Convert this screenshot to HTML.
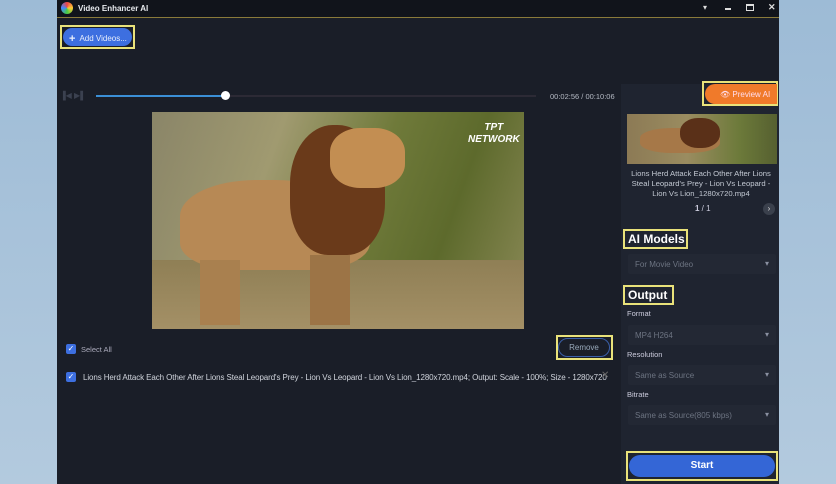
<!DOCTYPE html><html><head><style>
*{margin:0;padding:0;box-sizing:border-box}
body{width:836px;height:484px;overflow:hidden;background:linear-gradient(180deg,#9dbbd6,#b3cade);font-family:"Liberation Sans",sans-serif;position:relative}
.a{position:absolute}
.win{left:57px;top:0;width:722px;height:484px;background:#1a1e28}
.t{color:#c9ced8;font-size:8px}
.dd{background:#232834;border-radius:2px;height:20px;color:#6d7482;font-size:8px;padding:6px 0 0 7px}
.dd:after{content:"▾";position:absolute;right:7px;top:5px;color:#8a90a0;font-size:8px}
.hl{border:2px solid #e9e27a}
</style></head><body>
<div class="a win"></div>
<div class="a" style="left:57px;top:0;width:722px;height:18px;background:#11141b;border-bottom:1px solid #8a7a3a"></div>
<div class="a" style="left:61px;top:2px;width:12px;height:12px;border-radius:50%;background:conic-gradient(#e44,#fc3,#4c4,#48f,#e44)"></div>
<div class="a" style="left:78px;top:4px;color:#e8eaee;font-size:8px;font-weight:bold">Video Enhancer AI</div>
<div class="a" style="left:703px;top:3px;color:#ddd;font-size:8px">▾</div>
<div class="a" style="left:725px;top:8px;width:6px;height:2px;background:#ddd"></div>
<div class="a" style="left:746px;top:4px;width:8px;height:7px;border:1px solid #ddd;border-top-width:2px"></div>
<div class="a" style="left:768px;top:2px;color:#ddd;font-size:9px;font-weight:bold">✕</div>
<div class="a hl" style="left:60px;top:25px;width:75px;height:24px"></div>
<div class="a" style="left:63px;top:28px;width:69px;height:18px;background:#3d6fe0;border-radius:9px;color:#e8eefc;font-size:8px;padding:4px 0 0 6px"><b style="font-size:11px;position:relative;top:1px">+</b>&nbsp; Add Videos...</div>
<div class="a" style="left:60px;top:91px;color:#3b4150;font-size:8px">▐◀ ▶▌</div>
<div class="a" style="left:96px;top:95px;width:130px;height:2px;background:#3b8fd6"></div>
<div class="a" style="left:226px;top:95px;width:310px;height:2px;background:#2c2a35"></div>
<div class="a" style="left:221px;top:91px;width:9px;height:9px;border-radius:50%;background:#fff"></div>
<div class="a t" style="left:550px;top:92px;font-size:7.5px;color:#b5bac4">00:02:56 / 00:10:06</div>
<div class="a" style="left:621px;top:84px;width:158px;height:400px;background:#1f2430"></div>
<div class="a hl" style="left:702px;top:81px;width:76px;height:25px"></div>
<div class="a" style="left:705px;top:84px;width:72px;height:20px;background:#f07a2a;border-radius:10px 0 0 10px;color:#fde;font-size:8px;padding:6px 0 0 15px">👁 Preview AI</div>
<div class="a" style="left:152px;top:112px;width:372px;height:217px;background:linear-gradient(110deg,#8a8568 0%,#a09a70 30%,#6f7a3a 55%,#5d6a2c 75%,#8c8a58 100%)"></div>
<div class="a" style="left:152px;top:260px;width:372px;height:69px;background:linear-gradient(180deg,#8f7f55,#a49066)"></div>
<div class="a" style="left:180px;top:180px;width:190px;height:90px;border-radius:40% 50% 30% 30%;background:#b78955"></div>
<div class="a" style="left:290px;top:125px;width:95px;height:130px;border-radius:45% 50% 40% 40%;background:#6a3a1a"></div>
<div class="a" style="left:330px;top:128px;width:75px;height:60px;border-radius:40%;background:#c38e52"></div>
<div class="a" style="left:200px;top:260px;width:40px;height:65px;background:#a9804f"></div>
<div class="a" style="left:310px;top:255px;width:40px;height:70px;background:#9c7446"></div>
<div class="a" style="left:468px;top:122px;color:#fff;font-size:10px;font-weight:bold;font-style:italic;text-align:center;line-height:12px">TPT<br>NETWORK</div>
<div class="a" style="left:66px;top:344px;width:10px;height:10px;background:#3d6fe0;border-radius:2px;color:#fff;font-size:8px;line-height:10px;text-align:center">✓</div>
<div class="a t" style="left:81px;top:345px;font-size:7.5px;color:#aab">Select All</div>
<div class="a hl" style="left:556px;top:335px;width:57px;height:25px"></div>
<div class="a" style="left:558px;top:338px;width:52px;height:19px;border:1px solid #3a5fa8;border-radius:10px;color:#9ab;font-size:8px;text-align:center;line-height:17px">Remove</div>
<div class="a" style="left:66px;top:372px;width:10px;height:10px;background:#3d6fe0;border-radius:2px;color:#fff;font-size:8px;line-height:10px;text-align:center">✓</div>
<div class="a t" style="left:83px;top:373px;font-size:8px;color:#d0d4dc;white-space:nowrap;letter-spacing:-0.1px">Lions Herd Attack Each Other After Lions Steal Leopard's Prey - Lion Vs Leopard - Lion Vs Lion_1280x720.mp4; Output: Scale - 100%; Size - 1280x720</div>
<div class="a" style="left:601px;top:370px;color:#666;font-size:10px">✕</div>
<div class="a" style="left:627px;top:114px;width:150px;height:50px;background:linear-gradient(90deg,#8c7a55,#9a8c60 40%,#6c7a3a 75%,#566030)"></div>
<div class="a" style="left:640px;top:128px;width:80px;height:25px;border-radius:40%;background:#a67848"></div>
<div class="a" style="left:680px;top:118px;width:40px;height:30px;border-radius:45%;background:#5a3018"></div>
<div class="a" style="left:625px;top:169px;width:152px;text-align:center;color:#c2c8d2;font-size:7.7px;line-height:10px">Lions Herd Attack Each Other After Lions Steal Leopard's Prey - Lion Vs Leopard - Lion Vs Lion_1280x720.mp4</div>
<div class="a" style="left:695px;top:204px;color:#ccd;font-size:8px"><b>1</b> / 1</div>
<div class="a" style="left:763px;top:203px;width:12px;height:12px;border-radius:50%;background:#3a404c;color:#ddd;font-size:8px;text-align:center;line-height:12px">›</div>
<div class="a hl" style="left:623px;top:229px;width:65px;height:20px;color:#fff;font-size:12px;font-weight:bold;padding:1px 0 0 3px">AI Models</div>
<div class="a dd" style="left:628px;top:254px;width:148px">For Movie Video</div>
<div class="a hl" style="left:623px;top:285px;width:51px;height:20px;color:#fff;font-size:12px;font-weight:bold;padding:1px 0 0 3px">Output</div>
<div class="a t" style="left:627px;top:309px;font-size:7.5px;color:#ccd">Format</div>
<div class="a dd" style="left:628px;top:325px;width:148px">MP4 H264</div>
<div class="a t" style="left:627px;top:350px;font-size:7.5px;color:#ccd">Resolution</div>
<div class="a dd" style="left:628px;top:365px;width:148px">Same as Source</div>
<div class="a t" style="left:627px;top:390px;font-size:7.5px;color:#ccd">Bitrate</div>
<div class="a dd" style="left:628px;top:405px;width:148px">Same as Source(805 kbps)</div>
<div class="a hl" style="left:626px;top:451px;width:152px;height:30px"></div>
<div class="a" style="left:629px;top:455px;width:146px;height:22px;background:#3466d6;border-radius:11px;color:#fff;font-size:10px;font-weight:bold;text-align:center;line-height:22px">Start</div>
</body></html>
